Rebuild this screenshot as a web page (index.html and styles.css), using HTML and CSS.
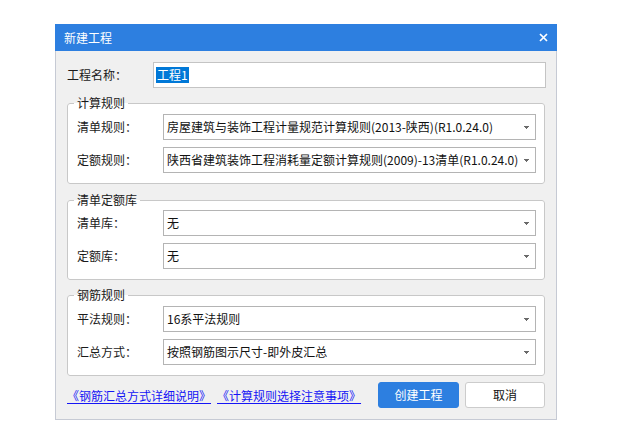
FILE: index.html
```html
<!DOCTYPE html>
<html lang="zh-CN">
<head>
<meta charset="utf-8">
<title>新建工程</title>
<link rel="stylesheet" href="styles.css">
</head>
<body>
<div class="dialog">
  <div class="titlebar">
    <span class="title">新建工程</span>
    <svg class="close" width="9" height="9" viewBox="0 0 9 9"><path d="M1 1L8 8M8 1L1 8" stroke="#fff" stroke-width="1.7" fill="none"/></svg>
  </div>
  <div class="body">
    <div class="name-row">
      <span class="label">工程名称：</span>
      <div class="input"><span class="sel">工程1</span></div>
    </div>

    <fieldset class="group group-calc">
      <legend>计算规则</legend>
      <div class="rows">
        <span class="label">清单规则：</span>
        <div class="select"><span class="val">房屋建筑与装饰工程计量规范计算规则(2013-陕西)(R1.0.24.0)</span><svg class="arrow" width="5" height="3" viewBox="0 0 5 3"><rect x="0" y="0" width="5" height="1"/><rect x="1" y="1" width="3" height="1"/><rect x="2" y="2" width="1" height="1"/></svg></div>
        <span class="label">定额规则：</span>
        <div class="select"><span class="val">陕西省建筑装饰工程消耗量定额计算规则(2009)-13清单(R1.0.24.0)</span><svg class="arrow" width="5" height="3" viewBox="0 0 5 3"><rect x="0" y="0" width="5" height="1"/><rect x="1" y="1" width="3" height="1"/><rect x="2" y="2" width="1" height="1"/></svg></div>
      </div>
    </fieldset>

    <fieldset class="group group-lib">
      <legend>清单定额库</legend>
      <div class="rows">
        <span class="label">清单库：</span>
        <div class="select"><span class="val">无</span><svg class="arrow" width="5" height="3" viewBox="0 0 5 3"><rect x="0" y="0" width="5" height="1"/><rect x="1" y="1" width="3" height="1"/><rect x="2" y="2" width="1" height="1"/></svg></div>
        <span class="label">定额库：</span>
        <div class="select"><span class="val">无</span><svg class="arrow" width="5" height="3" viewBox="0 0 5 3"><rect x="0" y="0" width="5" height="1"/><rect x="1" y="1" width="3" height="1"/><rect x="2" y="2" width="1" height="1"/></svg></div>
      </div>
    </fieldset>

    <fieldset class="group group-rebar">
      <legend>钢筋规则</legend>
      <div class="rows">
        <span class="label">平法规则：</span>
        <div class="select"><span class="val">16系平法规则</span><svg class="arrow" width="5" height="3" viewBox="0 0 5 3"><rect x="0" y="0" width="5" height="1"/><rect x="1" y="1" width="3" height="1"/><rect x="2" y="2" width="1" height="1"/></svg></div>
        <span class="label">汇总方式：</span>
        <div class="select"><span class="val">按照钢筋图示尺寸-即外皮汇总</span><svg class="arrow" width="5" height="3" viewBox="0 0 5 3"><rect x="0" y="0" width="5" height="1"/><rect x="1" y="1" width="3" height="1"/><rect x="2" y="2" width="1" height="1"/></svg></div>
      </div>
    </fieldset>

    <div class="footer">
      <div class="links">
        <a class="link" href="#">《钢筋汇总方式详细说明》</a>
        <a class="link" href="#">《计算规则选择注意事项》</a>
      </div>
      <div class="buttons">
        <button class="btn btn-primary">创建工程</button>
        <button class="btn btn-cancel">取消</button>
      </div>
    </div>
  </div>
</div>
</body>
</html>
```

FILE: styles.css
```css
html, body {
  margin: 0;
  padding: 0;
  background: #ffffff;
}
body {
  font-family: "Noto Sans CJK SC", "Noto Sans", sans-serif;
  font-size: 12px;
  line-height: 16px;
  color: #1a1a1a;
}
.dialog {
  width: 502px;
  margin: 24px 0 0 55px;
}
.titlebar {
  height: 27px;
  background: #2d7fe0;
  color: #ffffff;
  display: flex;
  align-items: center;
  justify-content: space-between;
  padding: 0 9px 0 9px;
  box-sizing: border-box;
}
.title {
  font-size: 12px;
}
.close {
  display: block;
}
.body {
  background: #f0f0f0;
  border: 1px solid #c6cad4;
  border-top: none;
  padding: 11px 11px 11px 11px;
}
.name-row {
  display: flex;
  align-items: center;
  height: 26px;
}
.label {
  width: 86px;
  flex: none;
  color: #1a1a1a;
  align-self: center;
}
.input {
  flex: 1;
  height: 26px;
  box-sizing: border-box;
  border: 1px solid #c4c4c4;
  background: #ffffff;
  margin-right: -1px;
  display: flex;
  align-items: center;
  padding-left: 2px;
}
.sel {
  background: #0078d7;
  color: #ffffff;
  line-height: 16px;
  padding: 0 1px;
}
.group {
  margin: 0;
  padding: 3px 8px 10px 9px;
  border: 1px solid #c8c8c8;
  border-radius: 3px;
  background: #ffffff;
  min-inline-size: 0;
}
.group-calc { margin-top: 7px; }
.group-lib { margin-top: 8px; padding-top: 2px; }
.group-rebar { margin-top: 7px; }
.group legend {
  padding: 0 3px;
  margin-left: -3px;
  line-height: 16px;
  color: #1a1a1a;
}
.rows {
  display: grid;
  grid-template-columns: 86px 373px;
  row-gap: 7px;
}
.select {
  height: 26px;
  box-sizing: border-box;
  border: 1px solid #b4b4b4;
  background: #ffffff;
  display: flex;
  align-items: center;
  justify-content: space-between;
  padding: 0 6px 0 3px;
  overflow: hidden;
}
.val {
  white-space: nowrap;
  color: #111;
}
.arrow {
  flex: none;
  display: block;
  margin-left: 2px;
  fill: #6a6a6a;
}
.footer {
  margin-top: 6px;
  display: flex;
  align-items: center;
  justify-content: space-between;
  height: 26px;
}
.links {
  display: flex;
  gap: 6px;
  padding-top: 2px;
}
.link {
  color: #1515f5;
  text-decoration: underline;
  text-underline-offset: 2px;
}
.buttons {
  display: flex;
  gap: 6px;
}
.btn {
  height: 26px;
  box-sizing: border-box;
  font-family: inherit;
  font-size: 12px;
  line-height: 16px;
  border-radius: 3px;
  padding: 0;
  cursor: pointer;
}
.btn-primary {
  width: 81px;
  background: #2d7fe0;
  border: 1px solid #2d7fe0;
  color: #ffffff;
}
.btn-cancel {
  width: 80px;
  background: #ffffff;
  border: 1px solid #cccccc;
  color: #111111;
}
```
